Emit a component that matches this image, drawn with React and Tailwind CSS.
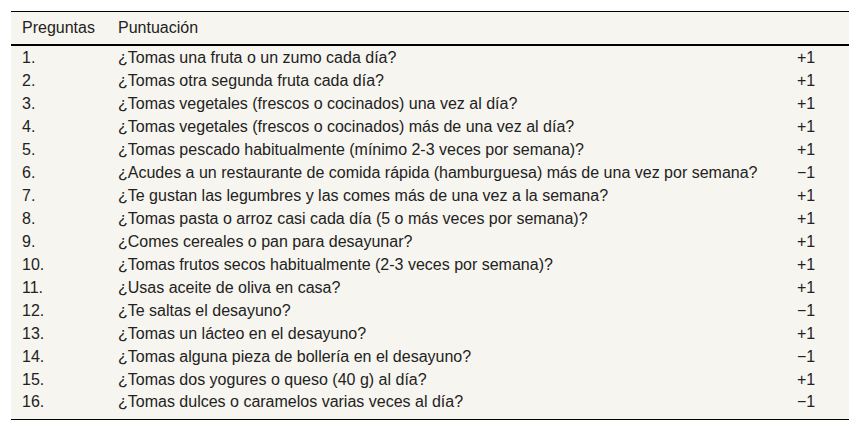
const rows = [
  ['1.', '¿Tomas una fruta o un zumo cada día?', '+1'],
  ['2.', '¿Tomas otra segunda fruta cada día?', '+1'],
  ['3.', '¿Tomas vegetales (frescos o cocinados) una vez al día?', '+1'],
  ['4.', '¿Tomas vegetales (frescos o cocinados) más de una vez al día?', '+1'],
  ['5.', '¿Tomas pescado habitualmente (mínimo 2-3 veces por semana)?', '+1'],
  ['6.', '¿Acudes a un restaurante de comida rápida (hamburguesa) más de una vez por semana?', '−1'],
  ['7.', '¿Te gustan las legumbres y las comes más de una vez a la semana?', '+1'],
  ['8.', '¿Tomas pasta o arroz casi cada día (5 o más veces por semana)?', '+1'],
  ['9.', '¿Comes cereales o pan para desayunar?', '+1'],
  ['10.', '¿Tomas frutos secos habitualmente (2-3 veces por semana)?', '+1'],
  ['11.', '¿Usas aceite de oliva en casa?', '+1'],
  ['12.', '¿Te saltas el desayuno?', '−1'],
  ['13.', '¿Tomas un lácteo en el desayuno?', '+1'],
  ['14.', '¿Tomas alguna pieza de bollería en el desayuno?', '−1'],
  ['15.', '¿Tomas dos yogures o queso (40 g) al día?', '+1'],
  ['16.', '¿Tomas dulces o caramelos varias veces al día?', '−1'],
];

export default function App() {
  return (
    <div className="w-[860px] h-[430px] bg-white pt-[11px] px-[11px] font-['Liberation_Sans',Arial,sans-serif] text-[16px] leading-[19px] text-[#222]">
      <table className="w-[838px] border-collapse bg-[#f7f5ef]">
        <thead>
          <tr className="border-t border-b-2 border-t-black border-b-black">
            <th className="h-[33px] pl-[11px] text-left font-normal w-[107px]">Preguntas</th>
            <th className="text-left font-normal">Puntuación</th>
            <th className="w-[52px]"></th>
          </tr>
        </thead>
        <tbody className="border-b border-black">
          {rows.map(([n, q, p], i) => {
            const last = i === rows.length - 1;
            const first = i === 0;
            const h = first ? 'h-[24px] pt-[1px]' : last ? 'h-[29px] pb-[6px]' : 'h-[23px]';
            return (
              <tr key={n}>
                <td className={`pl-[11px] ${h}`}>{n}</td>
                <td className={h}>{q}</td>
                <td className={h}>{p}</td>
              </tr>
            );
          })}
        </tbody>
      </table>
    </div>
  );
}
